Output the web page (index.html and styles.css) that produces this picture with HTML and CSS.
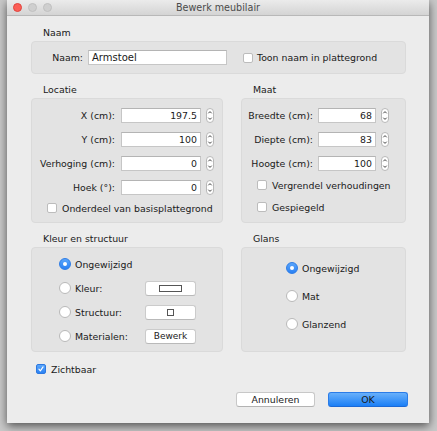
FILE: index.html
```html
<!DOCTYPE html>
<html>
<head>
<meta charset="utf-8">
<link rel="stylesheet" href="styles.css">
</head>
<body>
<div class="window">
  <div class="titlebar">
    <div class="lights">
      <span class="light red"></span>
      <span class="light"></span>
      <span class="light"></span>
    </div>
    <div class="title">Bewerk meubilair</div>
  </div>
  <div class="content">
    <div class="group-title">Naam</div>
    <div class="box box-naam">
      <span class="lbl lbl-naam">Naam:</span>
      <span class="input input-naam">Armstoel</span>
      <span class="check"></span>
      <span class="check-text">Toon naam in plattegrond</span>
    </div>

    <div class="row2">
      <div class="col-left">
        <div class="group-title">Locatie</div>
        <div class="box box-loc">
          <div class="field"><span class="lbl lbl-loc">X (cm):</span><span class="input num num-loc">197.5</span><span class="spin"><svg width="8" height="15" viewBox="0 0 8 15"><path d="M2.3 5.3 L4 3.6 L5.7 5.3 M2.3 9.7 L4 11.4 L5.7 9.7" fill="none" stroke="#444" stroke-width="1"/></svg></span></div>
          <div class="field"><span class="lbl lbl-loc">Y (cm):</span><span class="input num num-loc">100</span><span class="spin"><svg width="8" height="15" viewBox="0 0 8 15"><path d="M2.3 5.3 L4 3.6 L5.7 5.3 M2.3 9.7 L4 11.4 L5.7 9.7" fill="none" stroke="#444" stroke-width="1"/></svg></span></div>
          <div class="field"><span class="lbl lbl-loc">Verhoging (cm):</span><span class="input num num-loc">0</span><span class="spin"><svg width="8" height="15" viewBox="0 0 8 15"><path d="M2.3 5.3 L4 3.6 L5.7 5.3 M2.3 9.7 L4 11.4 L5.7 9.7" fill="none" stroke="#444" stroke-width="1"/></svg></span></div>
          <div class="field"><span class="lbl lbl-loc">Hoek (°):</span><span class="input num num-loc">0</span><span class="spin"><svg width="8" height="15" viewBox="0 0 8 15"><path d="M2.3 5.3 L4 3.6 L5.7 5.3 M2.3 9.7 L4 11.4 L5.7 9.7" fill="none" stroke="#444" stroke-width="1"/></svg></span></div>
          <div class="checkrow loc-check"><span class="check"></span><span class="check-text">Onderdeel van basisplattegrond</span></div>
        </div>
      </div>
      <div class="col-right">
        <div class="group-title">Maat</div>
        <div class="box box-maat">
          <div class="field"><span class="lbl lbl-maat">Breedte (cm):</span><span class="input num num-maat">68</span><span class="spin"><svg width="8" height="15" viewBox="0 0 8 15"><path d="M2.3 5.3 L4 3.6 L5.7 5.3 M2.3 9.7 L4 11.4 L5.7 9.7" fill="none" stroke="#444" stroke-width="1"/></svg></span></div>
          <div class="field"><span class="lbl lbl-maat">Diepte (cm):</span><span class="input num num-maat">83</span><span class="spin"><svg width="8" height="15" viewBox="0 0 8 15"><path d="M2.3 5.3 L4 3.6 L5.7 5.3 M2.3 9.7 L4 11.4 L5.7 9.7" fill="none" stroke="#444" stroke-width="1"/></svg></span></div>
          <div class="field"><span class="lbl lbl-maat">Hoogte (cm):</span><span class="input num num-maat">100</span><span class="spin"><svg width="8" height="15" viewBox="0 0 8 15"><path d="M2.3 5.3 L4 3.6 L5.7 5.3 M2.3 9.7 L4 11.4 L5.7 9.7" fill="none" stroke="#444" stroke-width="1"/></svg></span></div>
          <div class="checkrow maat-check maat-check1"><span class="check"></span><span class="check-text">Vergrendel verhoudingen</span></div>
          <div class="checkrow maat-check maat-check2"><span class="check"></span><span class="check-text">Gespiegeld</span></div>
        </div>
      </div>
    </div>

    <div class="row3">
      <div class="col-left">
        <div class="group-title">Kleur en structuur</div>
        <div class="box box-kleur">
          <div class="radiorow"><span class="radio on"></span><span class="radio-text">Ongewijzigd</span></div>
          <div class="radiorow"><span class="radio"></span><span class="radio-text rt-fixed">Kleur:</span><span class="sbtn"><span class="swatch"></span></span></div>
          <div class="radiorow"><span class="radio"></span><span class="radio-text rt-fixed">Structuur:</span><span class="sbtn"><span class="tex"></span></span></div>
          <div class="radiorow"><span class="radio"></span><span class="radio-text rt-fixed">Materialen:</span><span class="sbtn">Bewerk</span></div>
        </div>
      </div>
      <div class="col-right">
        <div class="group-title">Glans</div>
        <div class="box box-glans">
          <div class="radiorow glans-row"><span class="radio on"></span><span class="radio-text">Ongewijzigd</span></div>
          <div class="radiorow glans-row"><span class="radio"></span><span class="radio-text">Mat</span></div>
          <div class="radiorow glans-row"><span class="radio"></span><span class="radio-text">Glanzend</span></div>
        </div>
      </div>
    </div>

    <div class="checkrow visible-row"><span class="check checked"><svg width="10" height="10" viewBox="0 0 10 10"><path d="M2.4 5.2 L4.2 7.3 L7.6 2.4" fill="none" stroke="#fff" stroke-width="1.4" stroke-linecap="round" stroke-linejoin="round"/></svg></span><span class="check-text">Zichtbaar</span></div>

    <div class="buttons">
      <span class="btn">Annuleren</span>
      <span class="btn btn-ok">OK</span>
    </div>
  </div>
</div>
</body>
</html>
```
FILE: styles.css
```css
html, body {
  margin: 0;
  padding: 0;
}
body {
  width: 437px;
  height: 431px;
  background: #c9c9c9;
  font-family: "DejaVu Sans", sans-serif;
  font-size: 9.4px;
  color: #1a1a1a;
  overflow: hidden;
  white-space: nowrap;
}
.window {
  margin-left: 7px;
  width: 422px;
  height: 423px;
  background: #ececec;
  box-shadow: 0 3px 9px rgba(0, 0, 0, 0.6);
  display: flex;
  flex-direction: column;
}
.titlebar {
  height: 15px;
  border-bottom: 1px solid #b8b8b8;
  background: linear-gradient(#ebebeb, #d4d4d4);
  position: relative;
  display: flex;
  align-items: center;
  justify-content: center;
}
.lights {
  position: absolute;
  left: 6px;
  top: 3px;
  display: flex;
  gap: 6px;
}
.light {
  width: 9px;
  height: 9px;
  border-radius: 50%;
  background: #cfcfcf;
  box-sizing: border-box;
  border: 0.5px solid #c0c0c0;
}
.light.red {
  background: #fc5f57;
  border-color: #e0443e;
}
.title {
  font-size: 9.6px;
  color: #4b4b4b;
  line-height: 15px;
}
.content {
  padding: 11px 23px 0 24px;
  display: flex;
  flex-direction: column;
}
.group-title {
  margin-left: 12px;
  line-height: 12px;
  height: 12px;
  margin-bottom: 2px;
}
.box {
  background: #e3e3e3;
  border: 1px solid #dadada;
  border-radius: 4px;
  box-sizing: border-box;
}
.box-naam {
  height: 33px;
  display: flex;
  align-items: center;
}
.lbl {
  text-align: right;
  flex: none;
}
.lbl-naam {
  width: 51px;
  margin-right: 5px;
}
.input {
  height: 15px;
  background: #fff;
  border: 1px solid #c6c6c6;
  border-top-color: #b4b4b4;
  box-sizing: border-box;
  line-height: 13px;
  padding: 0 3px;
  flex: none;
}
.input-naam {
  width: 139px;
  font-size: 10px;
}
.check {
  width: 10px;
  height: 10px;
  box-sizing: border-box;
  background: #fff;
  border: 1px solid #bcbcbc;
  border-radius: 2px;
  flex: none;
  display: flex;
  align-items: center;
  justify-content: center;
}
.check.checked {
  background: linear-gradient(#5ba6fa, #2b82f4);
  border-color: #2c78e0;
}
.box-naam .check {
  margin-left: 16px;
  margin-right: 4px;
}
.row2, .row3 {
  display: flex;
  gap: 18px;
  margin-top: 10px;
}
.col-left {
  width: 192px;
  display: flex;
  flex-direction: column;
}
.col-right {
  width: 165px;
  display: flex;
  flex-direction: column;
}
.box-loc, .box-maat {
  height: 125px;
  padding-top: 4px;
  display: flex;
  flex-direction: column;
}
.field {
  height: 24px;
  display: flex;
  align-items: center;
}
.lbl-loc {
  width: 83px;
  margin-right: 6px;
}
.lbl-maat {
  width: 71px;
  margin-right: 5px;
}
.num {
  text-align: right;
}
.num-loc {
  width: 80px;
}
.num-maat {
  width: 58px;
}
.spin {
  margin-left: 5px;
  width: 8px;
  height: 15px;
  box-sizing: border-box;
  background: #fff;
  border: 0.5px solid #b8b8b8;
  border-radius: 4px;
  display: flex;
  align-items: center;
  justify-content: center;
  flex: none;
}
.spin svg {
  display: block;
  flex: none;
}
.checkrow {
  display: flex;
  align-items: center;
  height: 22px;
}
.checkrow .check {
  margin-right: 5px;
}
.loc-check {
  margin-left: 15px;
  height: 18px;
}
.maat-check {
  margin-left: 15px;
}
.maat-check1 {
  height: 20px;
}
.maat-check2 {
  height: 24px;
}
.box-kleur {
  height: 105px;
  padding-top: 4px;
}
.radiorow {
  height: 24px;
  display: flex;
  align-items: center;
  padding-left: 27px;
}
.radio {
  width: 12px;
  height: 12px;
  border-radius: 50%;
  box-sizing: border-box;
  background: #fff;
  border: 1px solid #b9b9b9;
  flex: none;
  margin-right: 4px;
  display: flex;
  align-items: center;
  justify-content: center;
}
.radio.on {
  background: linear-gradient(#5aa5fa, #2a81f4);
  border-color: #2d7ce6;
}
.radio.on::after {
  content: "";
  width: 4px;
  height: 4px;
  border-radius: 50%;
  background: #fff;
}
.rt-fixed {
  width: 70px;
}
.sbtn {
  width: 51px;
  height: 15px;
  box-sizing: border-box;
  background: #fff;
  border: 1px solid #cbcbcb;
  border-bottom-color: #b9b9b9;
  border-radius: 3px;
  display: flex;
  align-items: center;
  justify-content: center;
  font-size: 9px;
}
.swatch {
  width: 23px;
  height: 7px;
  box-sizing: border-box;
  border: 1px solid #555;
}
.tex {
  width: 7px;
  height: 7px;
  box-sizing: border-box;
  border: 1px solid #555;
}
.box-glans {
  height: 105px;
  padding-top: 6px;
}
.glans-row {
  height: 28px;
  padding-left: 44px;
}
.visible-row {
  margin-top: 8px;
  height: 18px;
  margin-left: 5px;
}
.visible-row .check {
  margin-right: 5px;
}
.buttons {
  margin-top: 14px;
  margin-right: -2px;
  display: flex;
  justify-content: flex-end;
  gap: 13px;
}
.btn {
  width: 79px;
  height: 15px;
  box-sizing: border-box;
  background: #fff;
  border: 1px solid #c8c8c8;
  border-bottom-color: #b3b3b3;
  border-radius: 3px;
  display: flex;
  align-items: center;
  justify-content: center;
}
.btn-ok {
  width: 80px;
  background: linear-gradient(#68b0fb, #1b7ff6);
  border-color: #2a7ce8;
  border-bottom-color: #1b69d6;
  color: #1a1a1a;
}
```
